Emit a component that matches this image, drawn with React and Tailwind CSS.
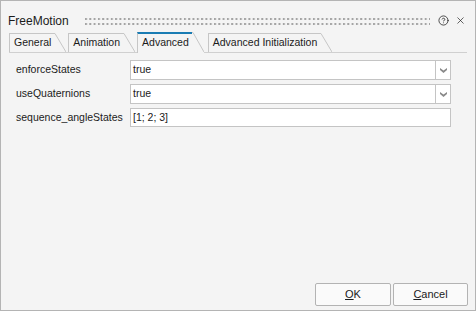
import React from "react";
import { CircleHelp, X } from "lucide-react";

function Tab({ label, active }) {
  if (active) {
    return (
      <div className="flex h-[21px] -mb-px ml-[2px] bg-[#f4f4f4]">
        <div className="flex items-center pl-[4px] pr-[3px] border-l border-l-[#c6c6c6] border-t-2 border-t-[#1a7cb3] pb-[1px]">
          {label}
        </div>
        <svg width="12" height="21" className="shrink-0">
          <path d="M0 0.5 L1 0.5 L12 20" stroke="#c6c6c6" fill="none" />
        </svg>
      </div>
    );
  }
  return (
    <div className="flex h-[19px] ml-[2px]">
      <div className="flex items-center pl-[4px] pr-[3px] border-l border-t border-[#c6c6c6]">
        {label}
      </div>
      <svg width="12" height="19" className="shrink-0">
        <path d="M0 0.5 L1 0.5 L12 19" stroke="#c6c6c6" fill="none" />
      </svg>
    </div>
  );
}

function Chevron() {
  return (
    <svg width="7" height="5" viewBox="0 0 7 5">
      <polygon points="0,0 3.5,2.5 7,0 7,2 3.5,5 0,2" fill="#8a8a8a" />
    </svg>
  );
}

function SelectBox({ value }) {
  return (
    <div className="flex h-[20px] border border-[#c4c4c4] bg-white">
      <div className="flex flex-1 items-center pl-[2px]">{value}</div>
      <div className="flex w-[15px] items-center justify-center border-l border-[#c4c4c4]">
        <Chevron />
      </div>
    </div>
  );
}

export default function App() {
  return (
    <div className="flex h-[311px] w-[476px] flex-col border border-[#b4b4b4] bg-[#f4f4f4] font-['Liberation_Sans',Arial,sans-serif] text-[#1b1b1b]">
      {/* title bar */}
      <div className="flex h-[31px] items-center pt-[8px] pl-[7px] pr-[9px]">
        <div className="text-[12px] leading-none">FreeMotion</div>
        <div className="ml-[16px] flex h-[10px] flex-1 items-center">
          <svg width="345" height="8">
            <defs>
              <pattern id="grip" x="0" y="0" width="4.3" height="5" patternUnits="userSpaceOnUse">
                <rect x="0" y="1" width="2" height="2" fill="#a4a4a4" />
              </pattern>
            </defs>
            <rect width="345" height="8" fill="url(#grip)" />
          </svg>
        </div>
        <CircleHelp size={11} strokeWidth={1.7} className="ml-[8px] text-[#222]" />
        <X size={11} strokeWidth={1.5} className="ml-[6px] text-[#222]" />
      </div>

      {/* tabs */}
      <div className="mx-[8px] flex h-[21px] items-end border-b border-[#d0d0d0] text-[10.5px]">
        <div className="-ml-[2px] flex items-end">
          <Tab label="General" />
          <Tab label="Animation" />
          <Tab label="Advanced" active />
          <div className="w-[2px]" />
          <Tab label="Advanced Initialization" />
        </div>
      </div>

      {/* properties */}
      <div className="grid grid-cols-[114px_321px] gap-y-[4px] pl-[15px] pt-[7px] text-[10.5px]">
        <div className="flex items-center">enforceStates</div>
        <SelectBox value="true" />
        <div className="flex items-center">useQuaternions</div>
        <SelectBox value="true" />
        <div className="flex items-center">sequence_angleStates</div>
        <div className="flex h-[19px] items-center border border-[#c4c4c4] bg-white pl-[2px]">[1; 2; 3]</div>
      </div>

      {/* footer */}
      <div className="mt-auto flex justify-end gap-[2px] pb-[4px] pr-[7px] text-[11px]">
        <button className="flex h-[23px] w-[76px] items-center justify-center rounded-[2px] border border-[#b3b3b3] bg-[#fafafa]">
          <span className="underline">O</span>K
        </button>
        <button className="flex h-[23px] w-[75px] items-center justify-center rounded-[2px] border border-[#b3b3b3] bg-[#fafafa]">
          <span className="underline">C</span>ancel
        </button>
      </div>
    </div>
  );
}
